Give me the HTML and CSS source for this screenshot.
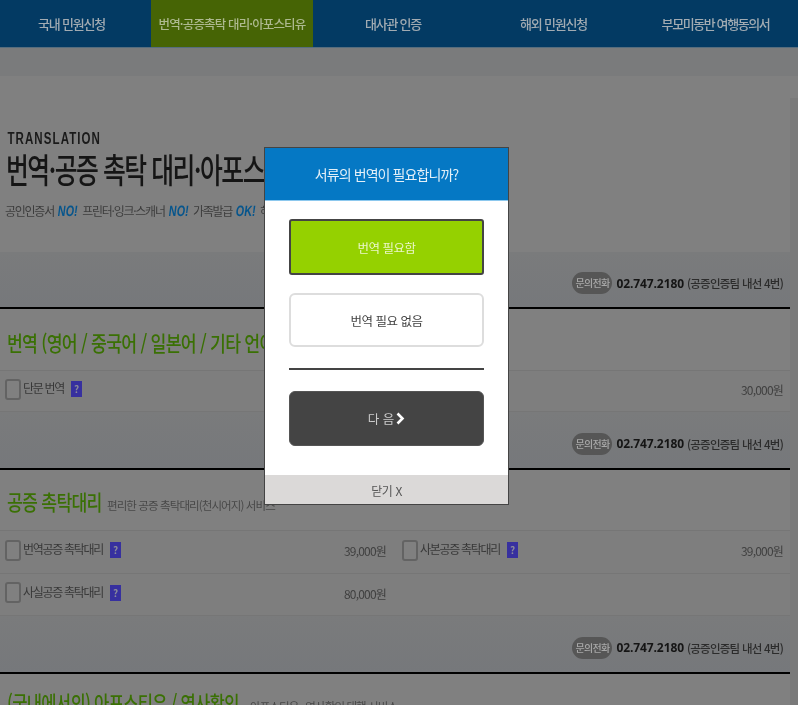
FILE: index.html
```html
<!DOCTYPE html>
<html lang="ko">
<head>
<meta charset="utf-8">
<title>번역·공증 촉탁 대리·아포스티유</title>
<link rel="stylesheet" href="styles.css">
</head>
<body>
<div class="page">
  <nav class="nav">
    <a class="nav-item n1">국내 민원신청</a>
    <a class="nav-item n2 active">번역·공증촉탁 대리·아포스티유</a>
    <a class="nav-item n3">대사관 인증</a>
    <a class="nav-item n4">해외 민원신청</a>
    <a class="nav-item n5">부모미동반 여행동의서</a>
  </nav>
  <div class="strip"></div>
  <div class="wrap">
  <main class="main">
    <header class="head">
      <div class="eng">TRANSLATION</div>
      <h1 class="title">번역·공증 촉탁 대리·아포스티유</h1>
      <p class="sub">공인인증서 <b>NO!</b> 프린터·잉크·스캐너 <b>NO!</b> 가족발급 <b>OK!</b> 해외에서도 신청 가능</p>
    </header>

    <div class="contact c1"><span class="pill">문의전화</span><strong>02.747.2180</strong><span class="ext">(공증인증팀 내선 4번)</span></div>
    <section class="sec s1">
      <h2 class="sec-title t1"><span class="tt">번역 (영어 / 중국어 / 일본어 / 기타 언어)</span></h2>
      <div class="row">
        <div class="cell">
          <span class="box"></span><span class="lab">단문 번역</span><span class="help">?</span>
        </div>
        <div class="cell right"><span class="price">30,000원</span></div>
      </div>
    </section>

    <div class="contact"><span class="pill">문의전화</span><strong>02.747.2180</strong><span class="ext">(공증인증팀 내선 4번)</span></div>
    <section class="sec">
      <h2 class="sec-title t2"><span class="tt">공증 촉탁대리</span><small>편리한 공증 촉탁대리(천시어지) 서비스</small></h2>
      <div class="row">
        <div class="cell">
          <span class="box"></span><span class="lab">번역공증 촉탁대리</span><span class="help">?</span><span class="price">39,000원</span>
        </div>
        <div class="cell">
          <span class="box"></span><span class="lab">사본공증 촉탁대리</span><span class="help">?</span><span class="price">39,000원</span>
        </div>
      </div>
      <div class="row">
        <div class="cell">
          <span class="box"></span><span class="lab">사실공증 촉탁대리</span><span class="help">?</span><span class="price">80,000원</span>
        </div>
        <div class="cell"></div>
      </div>
    </section>

    <div class="contact"><span class="pill">문의전화</span><strong>02.747.2180</strong><span class="ext">(공증인증팀 내선 4번)</span></div>
    <section class="sec">
      <h2 class="sec-title t3"><span class="tt">(국내에서의) 아포스티유 / 영사확인</span><small>아포스티유 · 영사확인 대행 서비스</small></h2>
    </section>
  </main>
  <div class="gutter"></div>
  </div>
</div>

<div class="modal">
  <div class="modal-head">서류의 번역이 필요합니까?</div>
  <div class="modal-body">
    <button class="btn yes">번역 필요함</button>
    <button class="btn no">번역 필요 없음</button>
    <hr class="rule">
    <button class="btn next">다 음<svg class="chev" width="9" height="13" viewBox="0 0 9 13"><path d="M1.5 1.5 6.5 6.5 1.5 11.5" fill="none" stroke="#fff" stroke-width="2.6"/></svg></button>
  </div>
  <div class="modal-foot">닫기 X</div>
</div>
</body>
</html>
```

FILE: styles.css
```css
* { box-sizing: border-box; }
html, body { margin: 0; height: 705px; overflow: hidden; background: #808080; }
body {
  position: relative;
  font-family: "Noto Sans CJK KR", "Noto Sans", sans-serif;
  color: #1a1a1a;
}
.page { filter: blur(0.55px); }

.nav { display: flex; height: 48px; background: #033a63; border-bottom: 1px solid #566d7e; }
.nav-item {
  display: flex; align-items: center; justify-content: center;
  height: 47px;
  color: #a2abb2; font-size: 13px; font-weight: 500; letter-spacing: -1.2px;
}
.n1 { width: 151px; padding-right: 8px; }
.n2 { width: 162px; background: #466405; color: #adb98f; font-size: 12.5px; letter-spacing: -.85px; white-space: nowrap; }
.n3 { width: 160px; }
.n4 { width: 155px; padding-left: 6px; }
.n5 { width: 170px; padding-left: 5px; letter-spacing: -1.4px; }

.strip { height: 28px; background: #7a7b7c; }

.wrap { display: flex; }
.main { width: 790px; flex: none; }
.gutter { flex: 1; margin-top: 22px; height: 640px; background: #7a7a7a; }

.head { height: 176px; padding: 53px 0 0 6px; }
.eng {
  font-family: "Liberation Sans", sans-serif;
  font-size: 16px; font-weight: 700; line-height: 20px; letter-spacing: 1.5px;
  color: #1a1a1a; padding-left: 2px;
  transform-origin: left; transform: scaleX(.72);
}
.title {
  margin: 1px 0 0; font-size: 34px; font-weight: 500; line-height: 38px;
  letter-spacing: -2px; color: #151515; white-space: nowrap;
  transform-origin: left; transform: scaleX(.73);
}
.sub {
  margin: 14px 0 0 -1px; font-size: 12px; line-height: 18px; letter-spacing: -1.25px;
  word-spacing: 2px;
  color: #3c3c3c; white-space: nowrap;
}
.sub b {
  font-family: "Liberation Sans", sans-serif;
  display: inline-block; width: 20px;
  font-size: 15px; font-weight: 700; letter-spacing: 0; color: #06558c;
  transform-origin: left; transform: scaleX(.72) skewX(-10deg);
}

.contact {
  display: flex; align-items: center; justify-content: flex-end;
  height: 58px; padding: 7px 7px 0 0; gap: 4px;
  background: linear-gradient(#7a7b7c, #76787b);
  border-bottom: 2px solid #000;
}
.contact.c1 { height: 57px; }
.pill {
  width: 40px; height: 22px; border-radius: 11px;
  background: #565656; color: #a8a8a8;
  font-size: 10px; letter-spacing: -.7px; text-align: center; line-height: 22px; font-weight: 500;
}
.contact strong { font-family: "Open Sans", sans-serif; font-size: 12px; font-weight: 700; color: #151515; letter-spacing: -.1px; }
.ext { font-size: 11.5px; color: #2c2c2c; font-weight: 500; letter-spacing: -.75px; margin-left: -1px; }

.sec-title {
  display: flex; align-items: baseline;
  margin: 0; height: 61px; padding: 13px 0 0 7px;
  font-size: 21px; font-weight: 500; line-height: 40px; letter-spacing: -.9px;
  color: #3a7004; white-space: nowrap;
}
.tt { display: inline-block; transform-origin: left; transform: scaleX(.82); }
.sec-title small { font-size: 11.5px; font-weight: 400; color: #484848; letter-spacing: -.9px; }
.t2 { height: 60px; padding-top: 11px; }
.t2 .tt { width: 100px; }
.t3 { padding-top: 8px; }
.t3 .tt { width: 243px; transform: scaleX(.79); }

.row {
  display: flex; height: 43px;
  background: #7e7e7e;
  border-top: 1px solid #767676;
}
.row:last-child { border-bottom: 1px solid #767676; }
.s1 .row { height: 42px; }

.cell {
  flex: 0 0 396px; display: flex; align-items: center;
  padding: 0 10px 0 5px;
}
.cell + .cell { flex: 1; padding-left: 6px; padding-right: 7px; }
.right { justify-content: flex-end; }
.box {
  width: 16px; height: 21px; flex: none; margin-top: -4px;
  border: 2px solid #636363; border-radius: 3px; background: #808080;
}
.lab { margin: -7px 0 0 2px; font-size: 12px; letter-spacing: -1.3px; color: #383838; white-space: nowrap; }
.help {
  width: 11px; height: 16px; flex: none; margin: -4px 0 0 7px;
  background: #37309f; color: #8a8a9a; font-size: 10px; font-weight: 700; line-height: 16px; text-align: center;
}
.price { margin: -3px 0 0 auto; font-size: 12px; letter-spacing: -.8px; color: #404040; }

.modal {
  position: absolute; left: 264px; top: 147px;
  width: 245px; height: 358px;
  display: flex; flex-direction: column;
  background: #fff; border: 1px solid #444;
  filter: blur(0.35px);
}
.modal-head {
  height: 53px; flex: none;
  background: #0578c4; border-bottom: 1px solid #8cc8ee;
  color: #e4f0f8; font-size: 14px; letter-spacing: -.9px;
  display: flex; align-items: center; justify-content: center;
}
.modal-body {
  flex: 1; padding: 18px 24px 0 24px;
  display: flex; flex-direction: column;
}
.btn {
  display: flex; align-items: center; justify-content: center;
  width: 195px; font: inherit; font-size: 12.5px; letter-spacing: -.5px; padding: 0;
}
.yes { height: 56px; background: #95d100; border: 2px solid #444; border-radius: 3px; color: #eaf6c8; }
.no { height: 54px; margin-top: 18px; background: #fff; border: 2px solid #ddd; border-radius: 6px; color: #444; }
.rule { width: 195px; height: 2px; margin: 21px 0; border: 0; background: #444; }
.next { height: 55px; background: #444; border: 1px solid #555; border-radius: 6px; color: #ccc; gap: 2px; letter-spacing: 0; }
.chev { display: block; }
.modal-foot {
  height: 29px; flex: none;
  background: #dbd9d8; color: #555;
  font-size: 12px; letter-spacing: -.4px;
  display: flex; align-items: center; justify-content: center;
  padding-top: 2px;
}
```
